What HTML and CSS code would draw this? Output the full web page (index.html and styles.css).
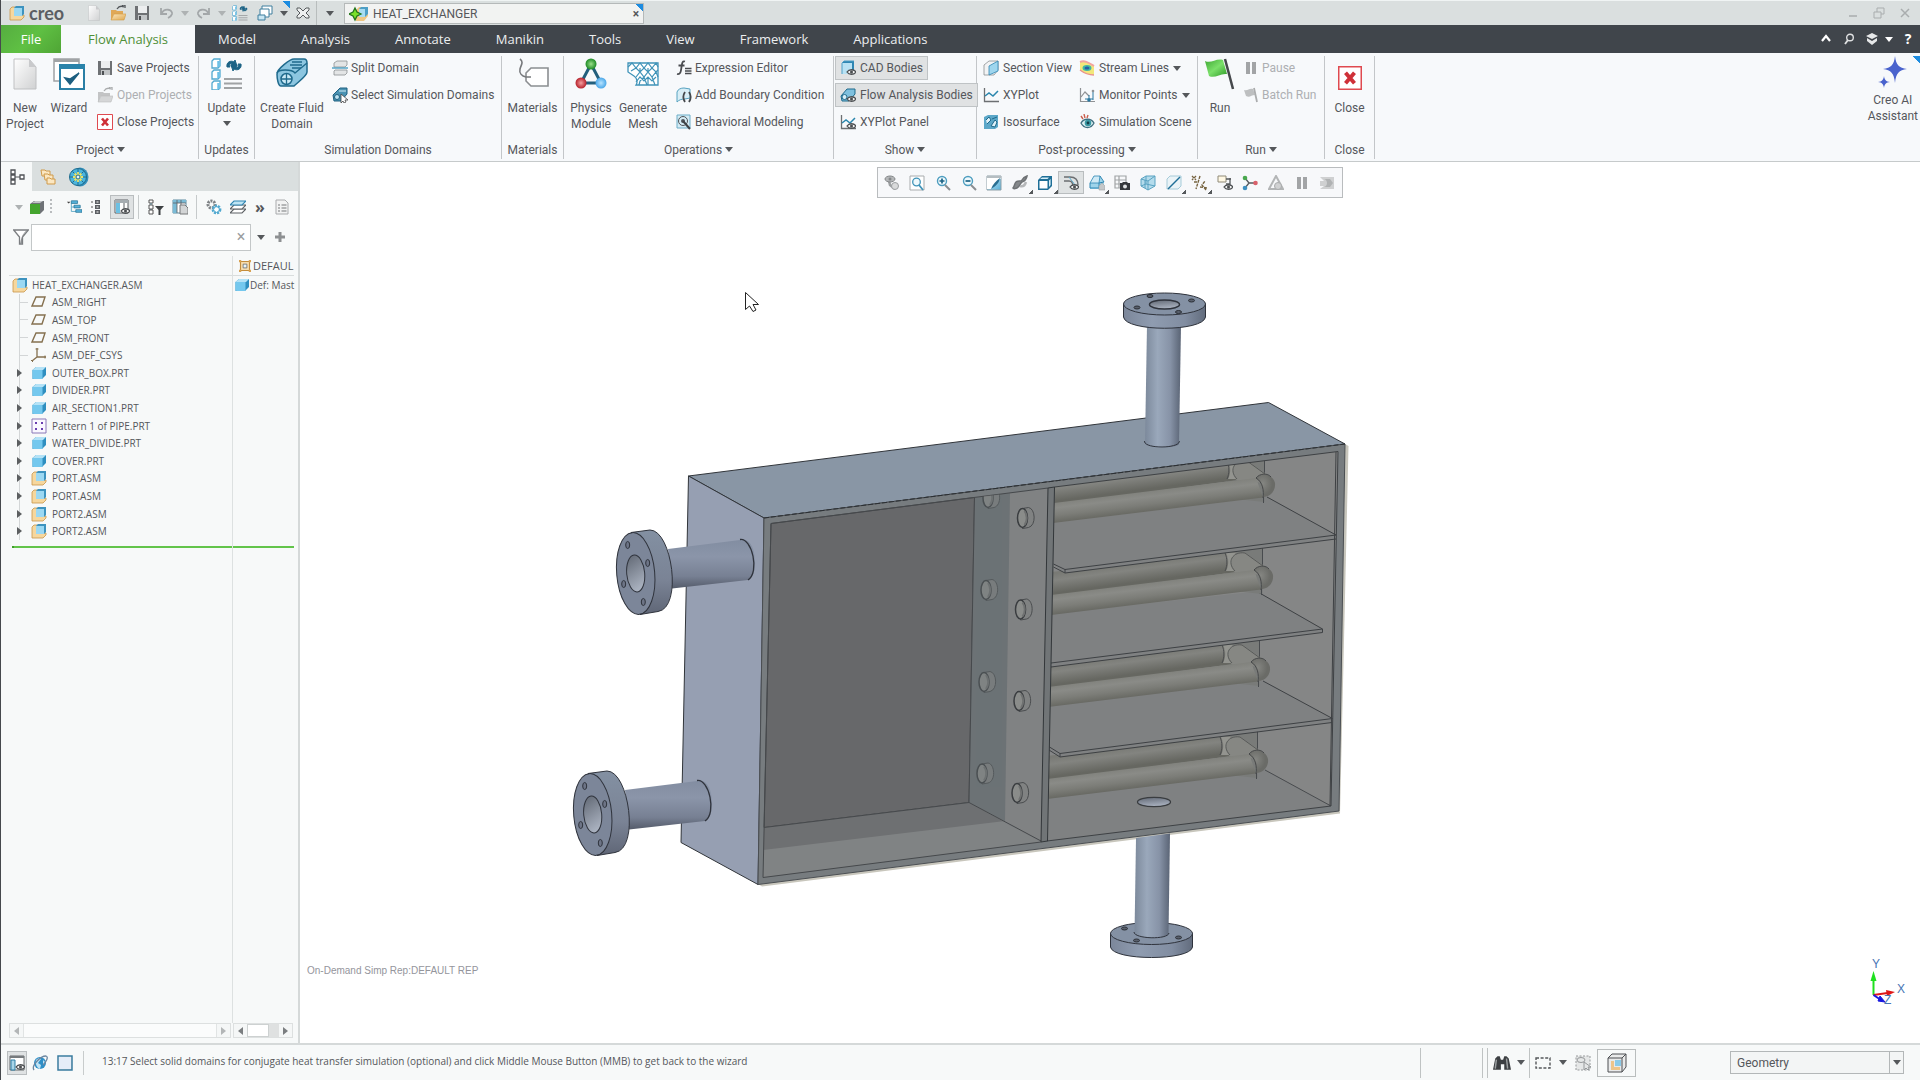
FILE: index.html
```html
<!DOCTYPE html>
<html lang="en">
<head>
<meta charset="utf-8">
<title>HEAT_EXCHANGER - Creo</title>
<link rel="stylesheet" href="styles.css">
</head>
<body>
<svg class="sprite" aria-hidden="true">
  <defs>
    <linearGradient id="gBlue" x1="0" y1="0" x2="1" y2="1"><stop offset="0" stop-color="#d3eefa"/><stop offset="1" stop-color="#58b0d8"/></linearGradient>
    <linearGradient id="gPage" x1="0" y1="0" x2="1" y2="1"><stop offset="0" stop-color="#fff"/><stop offset="1" stop-color="#d0d1d2"/></linearGradient>
    <linearGradient id="gFlag" x1="0" y1="0" x2="1" y2="1"><stop offset="0" stop-color="#3fa834"/><stop offset=".5" stop-color="#7be06a"/><stop offset="1" stop-color="#2f9a27"/></linearGradient>
    <linearGradient id="gGold" x1="0" y1="0" x2="1" y2="1"><stop offset="0" stop-color="#fbe6bd"/><stop offset="1" stop-color="#dfa850"/></linearGradient>
    <radialGradient id="gRed"><stop offset="0" stop-color="#f5a0a0"/><stop offset="1" stop-color="#b5202a"/></radialGradient>
    <radialGradient id="gGreen"><stop offset="0" stop-color="#9be08a"/><stop offset="1" stop-color="#1d8a25"/></radialGradient>
    <radialGradient id="gSky"><stop offset="0" stop-color="#b8e4ff"/><stop offset="1" stop-color="#4aa7e8"/></radialGradient>
  </defs>
  <symbol id="part" viewBox="0 0 16 16"><path d="M1.500 5l3.500-3h10v8l-4 4H1.500z" fill="#2f8fc0"/><path d="M1.500 5l3.500-3h10l-3 3z" fill="#b4e2f6"/><path d="M1.500 5h10v9H2.500l-1-1z" fill="#74c8ee"/></symbol>
  <symbol id="asm" viewBox="0 0 16 16"><path d="M1 4l2-2h4v8h8v2l-3 3H1z" fill="#f6d79e" stroke="#c9964a" stroke-width=".8"/><path d="M5 3l2-2h8v8l-2 2H5z" fill="#3d93bf"/><path d="M5 3h8v8H5z" fill="#9cd8f2"/></symbol>
  <symbol id="plane" viewBox="0 0 16 16"><path d="M5 3h9l-3 9H1z" fill="none" stroke="#85704f" stroke-width="1.400"/></symbol>
  <symbol id="csys" viewBox="0 0 16 16"><path d="M6 1v9h9M6 10l-5 4" fill="none" stroke="#85704f" stroke-width="1.300"/><path d="M4.500 2h3M14 8.500v3M0 13l2 2" stroke="#85704f"/></symbol>
  <symbol id="pattern" viewBox="0 0 16 16"><path d="M1 1h14v14H1z" fill="#faf8ff" stroke="#8b79b8"/><path d="M4 4h2v2H4zM10 4h2v2h-2zM4 10h2v2H4zM10 10h2v2h-2z" fill="#6a3fb0"/></symbol>
  <symbol id="page" viewBox="0 0 24 32"><path d="M1 1h15l7 8v22H1z" fill="url(#gPage)" stroke="#bfc0c2"/><path d="M16 1v8h7z" fill="#c9cacc"/></symbol>
  <symbol id="folder" viewBox="0 0 16 16"><path d="M1 5h5l1 1h6v3H4l-2 6H1z" fill="#e0a857"/><path d="M4 9h12l-2 6H1z" fill="url(#gGold)" stroke="#d29a45" stroke-width=".6"/><path d="M7 4c2-3 5-3 7-2m-2-2h3v3" fill="none" stroke="#505458" stroke-width="1.300"/></symbol>
  <symbol id="folderOff" viewBox="0 0 16 16"><path d="M1 5h5l1 1h6v3H4l-2 6H1z" fill="#c3c4c5"/><path d="M4 9h12l-2 6H1z" fill="#d5d6d7" stroke="#bcbdbe" stroke-width=".6"/><path d="M7 4c2-3 5-3 7-2m-2-2h3v3" fill="none" stroke="#aaacad" stroke-width="1.300"/></symbol>
  <symbol id="save" viewBox="0 0 16 16"><path d="M1 1h14v14H1z" fill="#6e7174"/><path d="M4 1h9v7H4z" fill="#eceeef"/><path d="M4 10h9v5H4z" fill="#c2c5c7"/><path d="M5 11h2v4H5z" fill="#4d5053"/></symbol>
  <symbol id="undo" viewBox="0 0 16 16"><path d="M3 3v6h6M4 8c2-5 11-4 10 1-.5 2-2 3-4 4" fill="none" stroke="#a3a7a9" stroke-width="1.800"/></symbol>
  <symbol id="regen" viewBox="0 0 32 32"><g fill="#fff" stroke="#51a9d0" stroke-width="1.300"><path d="M1 3l2-2h6v7l-2 2H1z"/><path d="M1 14l2-2h6v7l-2 2H1z"/><path d="M1 25l2-2h6v7l-2 2H1z"/></g><path d="M7.500 3v6M7.500 14v6M7.500 25v6" stroke="#6cc0e6" stroke-width="2.500"/><path d="M16 9c-1-5 4-7 7-5l1-2 2 6-6 0 1-2c-2-1-3 1-2 3zM30 6c1 5-4 7-7 5l-1 2-2-6 6 0-1 2c2 1 3-1 2-3z" fill="#1c6385" stroke="#1c6385"/><path d="M13 21h18M13 25.500h18M13 30h18" stroke="#9fa2a4" stroke-width="1.800"/></symbol>
  <symbol id="windows" viewBox="0 0 16 16"><path d="M5 1h10v8H5z" fill="#fff" stroke="#3f7f9e"/><path d="M3 4h9v8H3z" fill="#fff" stroke="#3f7f9e"/><path d="M1 10h7v5H1z" fill="#c9e6f3" stroke="#3f7f9e"/></symbol>
  <symbol id="xout" viewBox="0 0 16 16"><path d="M2 3h3l3 3 3-3h3v2l-3 3 3 3v2h-3l-3-3-3 3H2v-2l3-3-3-3z" fill="#eef0f0" stroke="#565a5d"/></symbol>
  <symbol id="wizard" viewBox="0 0 32 32"><path d="M1 1h25v22H1z" fill="#fff" stroke="#a0a3a5" stroke-width="1.500"/><path d="M1 1h25v3H1z" fill="#a0a3a5"/><path d="M7 8h24v23H7z" fill="#fff" stroke="#2a7fa5" stroke-width="2"/><path d="M6 6h26v5H6z" fill="#2a83aa"/><path d="M12 20l5 6 9-11-9 6z" fill="#1d5f80" stroke="#1d5f80" stroke-width="1.500"/></symbol>
  <symbol id="redx" viewBox="0 0 16 16"><path d="M.5.500h15v15H.500z" fill="#fff" stroke="#df4a50"/><path d="M5 4.500l6 7M11 4.500l-6 7" stroke="#cf3038" stroke-width="2.600"/></symbol>
  <symbol id="fluid" viewBox="0 0 32 32"><path d="M1 16C1 11 14 1 18 1h10c2 0 3 2 3 4v9c0 4-9 10-13 14H5c-3 0-4-8-4-12z" fill="#8cc6e0" stroke="#1f6a8c" stroke-width="1.500"/><path d="M1 15c1-4 15-4 18 0l12-10" fill="none" stroke="#1f6a8c" stroke-width="1.300"/><circle cx="10.500" cy="21" r="5.500" fill="#c8e8f5" stroke="#1f6a8c" stroke-width="1.500"/><path d="M10.500 15.500v11M5 21h11M16 4h10M14 7h12M16 10h9" stroke="#1f6a8c" stroke-width="1.300"/></symbol>
  <symbol id="split" viewBox="0 0 16 16"><path d="M2 3l3-2h10v4l-2 2H2z" fill="#e3e5e6" stroke="#8c9092" stroke-width=".8"/><path d="M0 8h16" stroke="#3e98bf" stroke-width="1.300"/><path d="M2 11l1-1h12v3l-2 2H2z" fill="#e3e5e6" stroke="#8c9092" stroke-width=".8"/></symbol>
  <symbol id="selsim" viewBox="0 0 16 16"><path d="M1 8l7-7h7v6l-6 7H2z" fill="#4b93b3" stroke="#1f6080" stroke-width="1"/><circle cx="5" cy="10" r="2.500" fill="#bfe3f2" stroke="#1f6080"/><path d="M7 4h7" stroke="#d5eef8"/><path d="M9 7v9l2-2 1 2 2-1-1-2h3z" fill="#fff" stroke="#444" stroke-width=".8"/></symbol>
  <symbol id="tag" viewBox="0 0 32 32"><path d="M9 15l5-5h17v18H14l-5-5z" fill="#fff" stroke="#8b8e91" stroke-width="1.600"/><path d="M3 1c4 3 1 6 0 10s2 7 6 8l5 0" fill="none" stroke="#77797c" stroke-width="1.600"/></symbol>
  <symbol id="physics" viewBox="0 0 32 32"><path d="M16 6L6 25h20z" fill="none" stroke="#235f7c" stroke-width="3"/><circle cx="16" cy="6" r="5.500" fill="url(#gGreen)"/><circle cx="6" cy="25" r="5.500" fill="url(#gRed)"/><circle cx="26" cy="25" r="5.500" fill="url(#gSky)"/></symbol>
  <symbol id="mesh" viewBox="0 0 32 32"><path d="M1 5h30v22H9c2-3 1-7-2-9l-6-4z" fill="#fff" stroke="#3f93b8" stroke-width="1.300"/><path d="M1 9l4-4 4 5 4-5 4 5 4-5 4 5 4-5 2 4M4 13l5-3 4 4 4-4 4 4 4-4 4 4 2-2M9 19l4-5 4 5 4-5 4 5 4-5 2 5M9 24l4-5 4 4 4-4 4 4 4-4M12 27l1-4 4-4 3 8M21 27V19M28 27l-3-8M13 10v4M21 10v4" fill="none" stroke="#3f93b8" stroke-width="1.200"/></symbol>
  <symbol id="fx" viewBox="0 0 16 16"><path d="M9 1.500C6 .5 6 4 5.500 7S5 15 1 14M2.500 5.500h6" fill="none" stroke="#4a4c50" stroke-width="1.800"/><path d="M9 8.500h6.500M9 11h6.500M9 13.500h6.500" stroke="#4a4c50" stroke-width="1.300"/></symbol>
  <symbol id="bound" viewBox="0 0 16 16"><path d="M1 15V5c1-3 4-4 7-4l6 1v9l-5 1c-4 0-6 1-8 3z" fill="#d8eef6" stroke="#56a2c0"/><path d="M9 5c-2 3-2 7 0 10M13 5c2 3 2 7 0 10" fill="none" stroke="#44484b" stroke-width="1.800"/></symbol>
  <symbol id="behav" viewBox="0 0 16 16"><path d="M1 1h13v13H1z" fill="#d5ecf5" stroke="#6cadc8"/><circle cx="7" cy="7" r="4.500" fill="none" stroke="#4f5459"/><circle cx="7" cy="7" r="2" fill="#4f5459"/><path d="M7 7l7 8" stroke="#3f4347" stroke-width="2"/></symbol>
  <symbol id="eye" viewBox="0 0 16 16"><path d="M7 12c2-3 7-3 9 0-2 3-7 3-9 0z" fill="#f4f4f4" stroke="#4b4e51" stroke-width="1.300"/><circle cx="11.500" cy="12" r="1.500" fill="#4b4e51"/></symbol>
  <symbol id="cadbody" viewBox="0 0 16 16"><path d="M2 3l2-2h10v11l-2 2H2z" fill="#2f86b3"/><path d="M2 3h10v11H2z" fill="#b9e2f4"/><path d="M2 14V3l2-2h10" fill="none" stroke="#4f9fc6"/><use href="#eye"/></symbol>
  <symbol id="flowbody" viewBox="0 0 16 16"><path d="M1 9l6-7h8v5l-6 7H2z" fill="#7fc0de" stroke="#1f6a8c"/><circle cx="4.500" cy="10" r="2.500" fill="#d7eef8" stroke="#1f6a8c"/><use href="#eye"/></symbol>
  <symbol id="plot" viewBox="0 0 16 16"><path d="M1.500 1v13.500H16" fill="none" stroke="#6c6f72" stroke-width="1.300"/><path d="M2 9l4-3 4 3 5-5" fill="none" stroke="#2a86ad" stroke-width="1.500"/></symbol>
  <symbol id="section" viewBox="0 0 16 16"><path d="M1 5l5-4h9v9l-4 5H1z" fill="#f2f3f4" stroke="#8c9093" stroke-width=".8"/><path d="M6 6l9-5v10l-9 4z" fill="#9fd6ee" stroke="#2f86b3" stroke-width=".8"/></symbol>
  <symbol id="iso" viewBox="0 0 16 16"><path d="M1 3l4-2h10v12l-3 2H1z" fill="#5ba7c8"/><path d="M3 6l3-3 2 3-4 4M9 5l5-2M8 12l4-6 2 2-2 5z" fill="#dff1f8" stroke="#1f6a8c"/></symbol>
  <symbol id="stream" viewBox="0 0 16 16"><path d="M1 2c5-2 9 1 14 4v9c-6 0-10-2-14-5z" fill="#f2e77a"/><path d="M1 2c5-2 9 1 14 4" fill="none" stroke="#f2a5a0" stroke-width="2"/><ellipse cx="8" cy="8" rx="4.500" ry="3" fill="#3eb6a6"/><ellipse cx="8" cy="8" rx="2.500" ry="1.500" fill="#285ea5"/><path d="M1 10c4 3 8 5 14 5" fill="none" stroke="#e9938f" stroke-width="1.500"/></symbol>
  <symbol id="monitor" viewBox="0 0 16 16"><path d="M1.500 1v13.500H16M2 10l4-5 4 4" fill="none" stroke="#8f9295" stroke-width="1.200"/><path d="M6 12h8M10 8v6M14 4v9" stroke="#2a78a0"/><circle cx="10" cy="13" r="1.800" fill="#2a78a0"/><circle cx="14" cy="4" r="1.300" fill="#8f9295"/></symbol>
  <symbol id="scene" viewBox="0 0 16 16"><path d="M2 9c3-5 10-5 13 0-3 6-10 6-13 0z" fill="#dff1f3" stroke="#3f6f80" stroke-width="1.300"/><circle cx="9" cy="9" r="3.300" fill="#3a9aa5"/><circle cx="9" cy="9" r="1.400" fill="#153d48"/><path d="M2 2l2 3M5 0l1 4M9 1L8 4" stroke="#c9604e" stroke-width="1.400"/></symbol>
  <symbol id="flag" viewBox="0 0 32 32"><path d="M1 3c6 3 11-3 18-1l4 14c-7-1-12 5-18 2z" fill="url(#gFlag)"/><path d="M21 1l8 30" stroke="#45484b" stroke-width="2.500"/></symbol>
  <symbol id="flagOff" viewBox="0 0 16 16"><path d="M1 3c4 1 5-2 9-1l2 6c-4 0-5 3-9 1z" fill="#bdbfc0"/><path d="M11 1l3 14" stroke="#aaacad" stroke-width="1.800"/></symbol>
  <symbol id="pause" viewBox="0 0 16 16"><path d="M3 2h4v12H3zM9 2h4v12H9z" fill="#a2a4a6"/></symbol>
  <symbol id="spark" viewBox="0 0 32 32"><path d="M18 0c1 9 4 12 12 13-8 1-11 4-12 14-1-10-4-13-12-14 8-1 11-4 12-13zM7 20c.6 4 2 5.500 6 6-4 .5-5.400 2-6 6-.6-4-2-5.500-6-6 4-.5 5.400-2 6-6z" fill="#4a63cd"/></symbol>
  <symbol id="mag" viewBox="0 0 16 16"><circle cx="7" cy="6" r="4.500" fill="#eef8fc" stroke="#4d9dbf" stroke-width="1.400"/><path d="M10 10l5 5" stroke="#8a8d90" stroke-width="2"/></symbol>
  <symbol id="zin" viewBox="0 0 16 16"><use href="#mag"/><path d="M4.500 6h5M7 3.500v5" stroke="#1c6385" stroke-width="1.700"/></symbol>
  <symbol id="zout" viewBox="0 0 16 16"><use href="#mag"/><path d="M4.500 6h5" stroke="#1c6385" stroke-width="1.700"/></symbol>
  <symbol id="zfit" viewBox="0 0 16 16"><path d="M1 1h14v14H1z" fill="#fff" stroke="#a9acae"/><circle cx="7.500" cy="7" r="3.800" fill="#eef8fc" stroke="#3f93b8" stroke-width="1.300"/><path d="M10 10l4 5" stroke="#3f93b8" stroke-width="1.800"/></symbol>
  <symbol id="refit" viewBox="0 0 16 16"><path d="M5 6l1 4 5 4" fill="none" stroke="#9c9fa1" stroke-width="2.500"/><ellipse cx="6" cy="4" rx="5" ry="3" fill="#b4b6b8" stroke="#85888a"/><circle cx="6" cy="4" r="1.500" fill="#85888a"/><circle cx="11" cy="11" r="3.500" fill="#d9dadb" stroke="#9c9fa1"/></symbol>
  <symbol id="repaint" viewBox="0 0 16 16"><path d="M1 1h14v14H1z" fill="url(#gBlue)" stroke="#8fa0a8"/><path d="M1 1h14v2L5 14H1z" fill="#fff"/><path d="M1 1h14v2H1z" fill="#b5bdc1"/><path d="M14 3c-1 5-4 8-9 11 2-5 5-8 9-11z" fill="#2a6f92"/></symbol>
  <symbol id="shade" viewBox="0 0 16 16"><path d="M15 1c-1 5-3 5-5 6s-2 5-5 6-3 1-4 0c2-2 1-4 3-6s5 0 6-2 2-3 5-4z" fill="#85888b" stroke="#6f7275" stroke-width="1.500"/><path d="M8 11c3 1 5-1 6-4" fill="none" stroke="#b5b7b9" stroke-width="2.500"/></symbol>
  <symbol id="box3" viewBox="0 0 16 16"><path d="M1 5l4-4h10v10l-4 4H1z" fill="#1f6f97"/><path d="M2.500 6h8v7.500h-8z" fill="#fff"/><path d="M3 4l2-1.600h7L10.500 4zM12 5.500L13.600 4v6L12 12z" fill="#d6eef8"/></symbol>
  <symbol id="appear" viewBox="0 0 16 16"><path d="M1 2h6c5 0 8 3 8 8M1 6h5c3 0 4 2 4 6" fill="none" stroke="#6b6e71" stroke-width="1.400"/><path d="M6 2l6 8" stroke="#57a7c7"/><use href="#eye"/></symbol>
  <symbol id="house" viewBox="0 0 16 16"><path d="M1 8l4-7h6l4 7v4l-3 2H1z" fill="#9ed4eb"/><path d="M5 1h6l-1 7H1z" fill="#cfeaf6" stroke="#2f86b3" stroke-width=".8"/><path d="M1 8v5h9V8l5-1-4-6" fill="none" stroke="#2f86b3"/><path d="M10 11l3-3 3 3v4h-6z" fill="#c4c7c9" stroke="#a0a3a5" stroke-width=".6"/></symbol>
  <symbol id="views" viewBox="0 0 16 16"><path d="M1 1h11v12H1zM1 5h11M1 9h11M5 1v12" fill="none" stroke="#a0a3a5" stroke-width="1.200"/><path d="M6 8h2l1-1h4l1 1h2v7H6z" fill="#35383b"/><circle cx="11" cy="11.500" r="2" fill="#e1e3e4"/></symbol>
  <symbol id="persp" viewBox="0 0 16 16"><path d="M1 4l5-3h9v10L8 15l-7-4z" fill="#b5dcec" stroke="#5aa3c2"/><path d="M8 6v9M1 4l7 2 7-5M5 5v8M6 1v8l9 2M6 9l-5 2" fill="none" stroke="#5aa3c2"/></symbol>
  <symbol id="plane3" viewBox="0 0 16 16"><path d="M1 4l3-3h11v10l-3 3H1z" fill="#eaf3f7" stroke="#a6cbd9"/><path d="M2 14L14 2" stroke="#1f6f97" stroke-width="1.500"/></symbol>
  <symbol id="datum" viewBox="0 0 16 16"><path d="M1 1l4 4M5 1L1 5M9 1L5 14M6 7H2M15 15l-4-5 3-4M9 12l7 1" fill="none" stroke="#776440" stroke-width="1.400" stroke-dasharray="3 1"/></symbol>
  <symbol id="annot" viewBox="0 0 16 16"><path d="M1 1h8v6H1z" fill="#fff8e4" stroke="#8f8a78"/><path d="M9 4h5M13 3v6h-4" fill="none" stroke="#55585b" stroke-width="1.300"/><use href="#eye"/></symbol>
  <symbol id="spin" viewBox="0 0 16 16"><path d="M3 3l4 5h7M7 8l-4 5" fill="none" stroke="#55595d" stroke-width="1.300"/><circle cx="3" cy="3" r="2.300" fill="#49a84e"/><circle cx="3" cy="13" r="2.300" fill="#3f8fc0"/><circle cx="13.500" cy="8" r="2.300" fill="#d9616b"/></symbol>
  <symbol id="tri" viewBox="0 0 16 16"><path d="M8 1l7 13H1z" fill="none" stroke="#b3b5b6" stroke-width="2"/><circle cx="10" cy="11" r="3.500" fill="#d0d1d2" stroke="#a9abac"/></symbol>
  <symbol id="stepOff" viewBox="0 0 16 16"><path d="M1 2h14v12H1l4-3H1V6h4z" fill="#cfd0d1"/><path d="M5 4h6l3 4-3 4H5c4-1 4-7 0-8z" fill="#b0b2b3"/></symbol>
  <symbol id="treeTab" viewBox="0 0 16 16"><path d="M4 4v8M4 8h7" stroke="#505357"/><g fill="#fff" stroke="#505357" stroke-width="1.300"><path d="M2 1h4v4H2zM2 6h4v4H2zM2 11h4v4H2zM11 6h4v4h-4z"/></g></symbol>
  <symbol id="foldTab" viewBox="0 0 16 16"><g fill="#fbe7c2" stroke="#cf9a4a"><path d="M1 1h4l1 1h4v5H2z"/><path d="M4 5h4l1 1h4v5H5z"/><path d="M7 9h3l1 1h4v5H7z"/></g></symbol>
  <symbol id="wheel" viewBox="0 0 20 20"><ellipse cx="11" cy="10" rx="8.500" ry="9.500" fill="#3590bb"/><circle cx="9" cy="10" r="8.500" fill="#4bb5de" stroke="#1f6a8c"/><path d="M9 2v16M1 10h16M3.500 4.500l11 11M14.500 4.500l-11 11" stroke="#1f6a8c" stroke-width="1"/><path d="M9 5v10M4 10h10M5.500 6.500l7 7M12.500 6.500l-7 7" stroke="#e7e36a" stroke-width="1.800"/><circle cx="9" cy="10" r="2" fill="#e6f4fa" stroke="#1f6a8c"/></symbol>
  <symbol id="green" viewBox="0 0 16 16"><path d="M1 5l4-3h10v9l-4 4H1z" fill="#6e7276"/><path d="M3 4l3-2h8l-3 2z" fill="#c2c5c7"/><path d="M1 5h10v10H1z" fill="#45a52f"/></symbol>
  <symbol id="treeA" viewBox="0 0 18 16"><path d="M1 2h4L3 4z" fill="#444"/><path d="M6 3v10h6M6 8h4" fill="none" stroke="#5aa6c5"/><path d="M6 1h7v3H6zM9 6h7v3H9zM11 11h7v3h-7z" fill="#57b3db" stroke="#236f92" stroke-width=".8"/></symbol>
  <symbol id="treeB" viewBox="0 0 10 16"><path d="M4 1h5v4H4zM4 6h5v4H4zM4 11h5v4H4z" fill="#5b5e62"/><path d="M5.500 3h2M5.500 8h2M5.500 13h2" stroke="#fff"/><path d="M0 3h2M0 8h2M0 13h2" stroke="#555"/></symbol>
  <symbol id="cols" viewBox="0 0 16 16"><path d="M1 1h13v13H1z" fill="#fff" stroke="#5d6164"/><path d="M1 1h13v3H1z" fill="#a6adb1"/><path d="M2 4h4v10H2z" fill="#6cc0e3"/><path d="M10 4v10" stroke="#5d6164"/><use href="#eye"/></symbol>
  <symbol id="filt" viewBox="0 0 16 16"><path d="M3 1v14" stroke="#4d9dbf"/><path d="M1 1h4v3H1zM1 6h4v4H1zM1 11h4v4H1z" fill="#fff" stroke="#555"/><path d="M7 7h9l-3.500 4v5h-2v-5z" fill="#3d4043"/></symbol>
  <symbol id="colset" viewBox="0 0 16 16"><path d="M1 1h13v13H1z" fill="#fff" stroke="#5d8ba0"/><path d="M1 1h13v3H1zM1 1h4v13H1z" fill="#7abbd6"/><path d="M1 4h13M5 1v13M9 1v13" stroke="#5d6164" stroke-width=".8"/><path d="M8 6h5l3 3v6H8z" fill="#d3d5d6" stroke="#77797b"/></symbol>
  <symbol id="gear" viewBox="0 0 16 16"><circle cx="5.500" cy="5.500" r="3.500" fill="none" stroke="#7e8285" stroke-width="3" stroke-dasharray="2 1"/><circle cx="10.500" cy="10.500" r="3.600" fill="#fff" stroke="#51a9d0" stroke-width="2.600" stroke-dasharray="2 1"/><circle cx="10.500" cy="10.500" r="3" fill="none" stroke="#51a9d0"/></symbol>
  <symbol id="layers" viewBox="0 0 16 16"><g fill="#fff" stroke="#5c6064" stroke-width="1.100"><path d="M4 10h12l-4 4H0z"/><path d="M4 6h12l-4 4H0z"/><path d="M4 2h12l-4 4H0z" fill="#bfe5f4" stroke="#2f86b3"/></g></symbol>
  <symbol id="docs" viewBox="0 0 16 16"><path d="M2 1h9l3 3v11H2z" fill="#f2f3f3" stroke="#a9abad"/><path d="M4 6h2M4 9h2M4 12h2M7.500 6h5M7.500 9h5M7.500 12h5" stroke="#a0a2a4" stroke-width="1.500"/></symbol>
  <symbol id="funnel" viewBox="0 0 16 16"><path d="M.7 1h14.600L9.500 8v7h-3V8z" fill="#fff" stroke="#7b7e81" stroke-width="1.300"/><path d="M14 1L9 8v7h-2c1-5 2-10 7-14z" fill="#8b8e91"/></symbol>
  <symbol id="frame" viewBox="0 0 16 16"><path d="M2 2h12v12H2z" fill="#f6dcae" stroke="#c48c3a" stroke-width="1.500"/><path d="M5.500 5.500h5v5h-5z" fill="#e6f4fb" stroke="#666" /><path d="M0 0h3v3H0zM13 0h3v3h-3zM0 13h3v3H0zM13 13h3v3h-3z" fill="#d8a253"/></symbol>
  <symbol id="binoc" viewBox="0 0 16 16"><path d="M2 4l2-2h2l1 3h2l1-3h2l2 2 2 10h-6V9H7v5H0z" fill="#3c3f42"/><path d="M3 5L2 13M12 4l1 9" stroke="#9b9fa1" stroke-width="1.300"/></symbol>
  <symbol id="navpane" viewBox="0 0 16 16"><path d="M1 1h14v14H1z" fill="#fff" stroke="#666a6d"/><path d="M1 1h14v2H1z" fill="#777b7e"/><path d="M2 5h4v10H2z" fill="#a9d5e8" stroke="#2f7fa5"/><use href="#eye"/></symbol>
  <symbol id="globe" viewBox="0 0 16 16"><circle cx="8" cy="8" r="6" fill="#2e8fc7"/><path d="M4 5c2-2 4-2 5-1L6 8l3 2-1 4C5 13 3 9 4 5zM11 5l2 2-2 3z" fill="#bfe3f5"/><path d="M2 15C-1 11 8 1 14 1c3 1 0 6-3 9" fill="none" stroke="#6b86a0" stroke-width="1.300"/></symbol>
  <symbol id="screen" viewBox="0 0 16 16"><path d="M1 1h14v14H1z" fill="url(#gPage)" stroke="#3a7ca0" stroke-width="1.500"/><path d="M2 2h12v12H2z" fill="#e6edf8"/></symbol>
  <symbol id="dash" viewBox="0 0 16 16"><path d="M1 3h14v10H1z" fill="none" stroke="#55585b" stroke-width="1.400" stroke-dasharray="3 1.600"/></symbol>
  <symbol id="selOff" viewBox="0 0 16 16"><path d="M1 1h14v14H1z" fill="#e5e7e7" stroke="#96999b" stroke-dasharray="2 1.500"/><ellipse cx="6" cy="5" rx="4" ry="2.500" fill="none" stroke="#96999b"/><path d="M9 7v8l2-2 2 2 1-1-1-2h3z" fill="#e5e7e7" stroke="#96999b"/></symbol>
  <symbol id="volume" viewBox="0 0 20 20"><path d="M1 5l4-4h14v13l-4 5H1z" fill="#e9eaea" stroke="#4c4f52"/><path d="M1 5h14v14M15 5l4-4" fill="none" stroke="#4c4f52"/><path d="M4 8h3v6h6v3H4z" fill="#eec58a"/><path d="M8 7h6v6H8z" fill="#8ccbe8"/></symbol>
</svg>

<div class="app">
  <header class="titlebar">
    <div class="brand"><svg class="i16"><use href="#asm"/></svg><span>creo</span></div>
    <button class="ib w24" aria-label="New"><svg class="i16"><use href="#page"/></svg></button>
    <button class="ib w24" aria-label="Open"><svg class="i16"><use href="#folder"/></svg></button>
    <button class="ib w24" aria-label="Save"><svg class="i16"><use href="#save"/></svg></button>
    <button class="ib w24" aria-label="Undo"><svg class="i16"><use href="#undo"/></svg></button>
    <button class="ib w14" aria-label="Undo list"><i class="arr off"></i></button>
    <button class="ib w24" aria-label="Redo"><svg class="i16 flip"><use href="#undo"/></svg></button>
    <button class="ib w12" aria-label="Redo list"><i class="arr off"></i></button>
    <button class="ib w24" aria-label="Regenerate"><svg class="i16"><use href="#regen"/></svg></button>
    <button class="ib w26" aria-label="Windows"><svg class="i16"><use href="#windows"/></svg></button>
    <button class="ib w12 corner" aria-label="Windows list"><i class="arr"></i></button>
    <button class="ib w26" aria-label="Close window"><svg class="i16"><use href="#xout"/></svg></button>
    <button class="ib w26 lined" aria-label="Customize toolbar"><i class="arr"></i></button>
    <div class="doctab corner"><svg class="i20" viewBox="0 0 20 16"><path d="M7 4l3-3h9v9l-4 5H7z" fill="#efc682"/><path d="M10 3l2-2h7v7l-3 3h-6z" fill="#4e9fc6"/><path d="M10 3h6v8h-6z" fill="#a8dcf2"/><path d="M6 2l2 4 4 2-4 2-2 4-2-4-4-2 4-2z" fill="#7be02a" stroke="#23761c" stroke-width="1.300"/></svg><span>HEAT_EXCHANGER</span><button class="ib w12" aria-label="Close tab">×</button></div>
    <div class="winbtns">
      <button class="ib w26" aria-label="Minimize"><svg class="i12" viewBox="0 0 12 12"><path d="M2 9h8" stroke="#a9adae" stroke-width="1.500"/></svg></button>
      <button class="ib w26" aria-label="Restore"><svg class="i12" viewBox="0 0 12 12"><path d="M1 5h7v6H1zM4 5V1h7v6H8" fill="none" stroke="#a9adae"/></svg></button>
      <button class="ib w26" aria-label="Close"><svg class="i12" viewBox="0 0 12 12"><path d="M2 2l8 8M10 2l-8 8" stroke="#a9adae" stroke-width="1.500"/></svg></button>
    </div>
  </header>

  <nav class="tabs">
    <a class="file" href="#file">File</a>
    <a class="active" href="#flow">Flow Analysis</a>
    <a href="#model">Model</a><a href="#analysis">Analysis</a><a href="#annotate">Annotate</a><a href="#manikin">Manikin</a><a href="#tools">Tools</a><a href="#view">View</a><a href="#framework">Framework</a><a href="#applications">Applications</a>
    <div class="tabtools">
      <button class="ib w20" aria-label="Minimize ribbon"><svg class="i12" viewBox="0 0 12 12"><path d="M2 8l4-5 4 5" fill="none" stroke="#fff" stroke-width="2.200"/></svg></button>
      <button class="ib w26" aria-label="Search"><svg class="i12" viewBox="0 0 12 12"><circle cx="7" cy="4.500" r="3.300" fill="none" stroke="#dfe1e2" stroke-width="1.400"/><path d="M5 7l-3 4" stroke="#dfe1e2" stroke-width="1.800"/></svg></button>
      <button class="ib w20" aria-label="Learning"><svg class="i12" viewBox="0 0 12 12"><path d="M6 0l6 3-6 3-6-3zM1 5l5 3 5-3v3l-5 4-5-4z" fill="#e6e8e9"/></svg></button>
      <button class="ib w14" aria-label="Learning list"><i class="arr light"></i></button>
      <button class="ib w24 help" aria-label="Help">?</button>
    </div>
  </nav>

  <section class="ribbon">
    <div class="group g-project">
      <div class="tools">
        <button class="big b44"><svg class="i32"><use href="#page"/></svg>New<br>Project</button>
        <button class="big b44"><svg class="i32"><use href="#wizard"/></svg>Wizard</button>
        <div class="stack">
          <button class="sm"><svg class="i16"><use href="#save"/></svg>Save Projects</button>
          <button class="sm" disabled><svg class="i16"><use href="#folderOff"/></svg>Open Projects</button>
          <button class="sm"><svg class="i16"><use href="#redx"/></svg>Close Projects</button>
        </div>
      </div>
      <div class="cap">Project <i class="arr"></i></div>
    </div>
    <div class="group g-updates">
      <div class="tools mid"><button class="big b44"><svg class="i32"><use href="#regen"/></svg>Update<br><i class="arr"></i></button></div>
      <div class="cap">Updates</div>
    </div>
    <div class="group g-domains">
      <div class="tools">
        <button class="big b72"><svg class="i32"><use href="#fluid"/></svg>Create Fluid<br>Domain</button>
        <div class="stack tight">
          <button class="sm"><svg class="i16"><use href="#split"/></svg>Split Domain</button>
          <button class="sm"><svg class="i16"><use href="#selsim"/></svg>Select Simulation Domains</button>
        </div>
      </div>
      <div class="cap">Simulation Domains</div>
    </div>
    <div class="group g-materials">
      <div class="tools mid"><button class="big b60"><svg class="i32"><use href="#tag"/></svg>Materials</button></div>
      <div class="cap">Materials</div>
    </div>
    <div class="group g-operations">
      <div class="tools">
        <button class="big b44"><svg class="i32"><use href="#physics"/></svg>Physics<br>Module</button>
        <button class="big b60"><svg class="i32"><use href="#mesh"/></svg>Generate<br>Mesh</button>
        <div class="stack tight">
          <button class="sm"><svg class="i16"><use href="#fx"/></svg>Expression Editor</button>
          <button class="sm"><svg class="i16"><use href="#bound"/></svg>Add Boundary Condition</button>
          <button class="sm"><svg class="i16"><use href="#behav"/></svg>Behavioral Modeling</button>
        </div>
      </div>
      <div class="cap">Operations <i class="arr"></i></div>
    </div>
    <div class="group g-show">
      <div class="tools">
        <div class="stack">
          <button class="sm on" aria-pressed="true"><svg class="i16"><use href="#cadbody"/></svg>CAD Bodies</button>
          <button class="sm on" aria-pressed="true"><svg class="i16"><use href="#flowbody"/></svg>Flow Analysis Bodies</button>
          <button class="sm"><svg class="i16"><use href="#plot"/><use href="#eye"/></svg>XYPlot Panel</button>
        </div>
      </div>
      <div class="cap">Show <i class="arr"></i></div>
    </div>
    <div class="group g-post">
      <div class="tools">
        <div class="stack">
          <button class="sm"><svg class="i16"><use href="#section"/></svg>Section View</button>
          <button class="sm"><svg class="i16"><use href="#plot"/></svg>XYPlot</button>
          <button class="sm"><svg class="i16"><use href="#iso"/></svg>Isosurface</button>
        </div>
        <div class="stack">
          <button class="sm"><svg class="i16"><use href="#stream"/></svg>Stream Lines <i class="arr"></i></button>
          <button class="sm"><svg class="i16"><use href="#monitor"/></svg>Monitor Points <i class="arr"></i></button>
          <button class="sm"><svg class="i16"><use href="#scene"/></svg>Simulation Scene</button>
        </div>
      </div>
      <div class="cap">Post-processing <i class="arr"></i></div>
    </div>
    <div class="group g-run">
      <div class="tools">
        <button class="big b40"><svg class="i32"><use href="#flag"/></svg>Run</button>
        <div class="stack tight">
          <button class="sm" disabled><svg class="i16"><use href="#pause"/></svg>Pause</button>
          <button class="sm" disabled><svg class="i16"><use href="#flagOff"/></svg>Batch Run</button>
        </div>
      </div>
      <div class="cap">Run <i class="arr"></i></div>
    </div>
    <div class="group g-close">
      <div class="tools mid"><button class="big b44"><svg class="i32" viewBox="0 0 32 32"><use href="#redx" x="3" y="8" width="26" height="24"/></svg>Close</button></div>
      <div class="cap">Close</div>
    </div>
    <button class="big assistant corner"><svg class="i32"><use href="#spark"/></svg>Creo AI<br>Assistant</button>
  </section>

  <main class="work">
    <aside class="side">
      <div class="sidetabs">
        <button class="ib on" aria-label="Model Tree"><svg class="i16"><use href="#treeTab"/></svg></button>
        <button class="ib" aria-label="Folder Browser"><svg class="i16"><use href="#foldTab"/></svg></button>
        <button class="ib" aria-label="Flow Analysis Tree"><svg class="i20"><use href="#wheel"/></svg></button>
      </div>
      <div class="sidebar-tools">
        <button class="ib w16" aria-label="Tree list"><i class="arr off"></i></button>
        <button class="ib w20" aria-label="Active model"><svg class="i16"><use href="#green"/></svg></button>
        <span class="grip"></span>
        <button class="ib w24" aria-label="Tree view"><svg class="i16"><use href="#treeA"/></svg></button>
        <button class="ib w20" aria-label="Expand all"><svg class="i16"><use href="#treeB"/></svg></button>
        <button class="ib w24 on" aria-label="Show columns" aria-pressed="true"><svg class="i16"><use href="#cols"/></svg></button>
        <span class="sep"></span>
        <button class="ib w24" aria-label="Tree filters"><svg class="i16"><use href="#filt"/></svg></button>
        <button class="ib w24" aria-label="Tree columns"><svg class="i16"><use href="#colset"/></svg></button>
        <span class="sep"></span>
        <button class="ib w24" aria-label="Settings"><svg class="i16"><use href="#gear"/></svg></button>
        <button class="ib w24" aria-label="Layers"><svg class="i16"><use href="#layers"/></svg></button>
        <button class="ib w20 more" aria-label="More">»</button>
        <button class="ib w24" aria-label="Show"><svg class="i16"><use href="#docs"/></svg></button>
      </div>
      <div class="filter">
        <svg class="i16"><use href="#funnel"/></svg>
        <label class="searchbox"><input type="text" aria-label="Search the model tree"><span>×</span></label>
        <button class="ib w16" aria-label="Search options"><i class="arr"></i></button>
        <button class="ib w24" aria-label="Add filter"><svg class="i12" viewBox="0 0 12 12"><path d="M6 1v10M1 6h10" stroke="#8d9092" stroke-width="3"/></svg></button>
      </div>
      <div class="tree">
        <div class="treemain">
          <div class="head"></div>
          <ul class="rows">
            <li class="root"><svg class="i16"><use href="#asm"/></svg>HEAT_EXCHANGER.ASM</li>
            <li><b></b><svg class="i16"><use href="#plane"/></svg>ASM_RIGHT</li>
            <li><b></b><svg class="i16"><use href="#plane"/></svg>ASM_TOP</li>
            <li><b></b><svg class="i16"><use href="#plane"/></svg>ASM_FRONT</li>
            <li><b></b><svg class="i16"><use href="#csys"/></svg>ASM_DEF_CSYS</li>
            <li><b class="exp"></b><svg class="i16"><use href="#part"/></svg>OUTER_BOX.PRT</li>
            <li><b class="exp"></b><svg class="i16"><use href="#part"/></svg>DIVIDER.PRT</li>
            <li><b class="exp"></b><svg class="i16"><use href="#part"/></svg>AIR_SECTION1.PRT</li>
            <li><b class="exp"></b><svg class="i16"><use href="#pattern"/></svg>Pattern 1 of PIPE.PRT</li>
            <li><b class="exp"></b><svg class="i16"><use href="#part"/></svg>WATER_DIVIDE.PRT</li>
            <li><b class="exp"></b><svg class="i16"><use href="#part"/></svg>COVER.PRT</li>
            <li><b class="exp"></b><svg class="i16"><use href="#asm"/></svg>PORT.ASM</li>
            <li><b class="exp"></b><svg class="i16"><use href="#asm"/></svg>PORT.ASM</li>
            <li><b class="exp"></b><svg class="i16"><use href="#asm"/></svg>PORT2.ASM</li>
            <li><b class="exp"></b><svg class="i16"><use href="#asm"/></svg>PORT2.ASM</li>
          </ul>
          <div class="endline first"></div>
        </div>
        <div class="treecol">
          <div class="head"><svg class="i12"><use href="#frame"/></svg>DEFAUL</div>
          <div class="rows"><div class="cell"><svg class="i16"><use href="#part"/></svg>Def: Mast</div></div>
          <div class="endline"></div>
        </div>
      </div>
      <div class="scrolls">
        <div class="hs main"><i class="al dim"></i><span class="track"></span><i class="ar dim"></i></div>
        <div class="hs"><i class="al"></i><span class="thumb"></span><span class="gray"></span><i class="ar"></i></div>
      </div>
    </aside>

    <section class="canvas">
      <svg class="model" viewBox="300 162 1620 881" preserveAspectRatio="xMidYMid meet">
        <defs>
          <linearGradient id="cylV" x1="0" x2="1"><stop offset="0" stop-color="#7c899b"/><stop offset=".35" stop-color="#9aa8bb"/><stop offset=".7" stop-color="#8793a7"/><stop offset="1" stop-color="#5a6475"/></linearGradient>
          <linearGradient id="rimV" x1="0" x2="1"><stop offset="0" stop-color="#7c879a"/><stop offset=".35" stop-color="#8f9cb0"/><stop offset=".75" stop-color="#818da1"/><stop offset="1" stop-color="#626c7d"/></linearGradient>
          <linearGradient id="cylH" x1="0" x2="0" y1="0" y2="1"><stop offset="0" stop-color="#828da1"/><stop offset=".35" stop-color="#8b95a9"/><stop offset=".75" stop-color="#778093"/><stop offset="1" stop-color="#545b6a"/></linearGradient>
          <linearGradient id="rim" x1="0" x2="0" y1="0" y2="1"><stop offset="0" stop-color="#8390a2"/><stop offset=".6" stop-color="#7a8395"/><stop offset="1" stop-color="#5f6676"/></linearGradient>
          <linearGradient id="bore" x1="0" y1="0" x2=".3" y2="1"><stop offset="0" stop-color="#5f6672"/><stop offset="1" stop-color="#a8b0be"/></linearGradient>
          <linearGradient id="tube" gradientUnits="userSpaceOnUse" x1="1150" y1="582" x2="1152.500" y2="603"><stop offset="0" stop-color="#80817c"/><stop offset=".3" stop-color="#8a8b87"/><stop offset=".65" stop-color="#7c7d78"/><stop offset="1" stop-color="#686963"/></linearGradient>
          <linearGradient id="tubeB" gradientUnits="userSpaceOnUse" x1="1150" y1="561" x2="1152.500" y2="580"><stop offset="0" stop-color="#797a75"/><stop offset=".35" stop-color="#838480"/><stop offset="1" stop-color="#666761"/></linearGradient>
          <radialGradient id="ball" cx=".35" cy=".4"><stop offset="0" stop-color="#858682"/><stop offset="1" stop-color="#6a6b67"/></radialGradient>
          <clipPath id="air"><path d="M1054.500 487L1338 451.500L1331 806L1047 841z"/></clipPath>
          <clipPath id="wall"><path d="M974.500 497.500L1048 488.500L1041 842L969 802z"/></clipPath>
          <g id="pipe">
            <path d="M1225 549L1262.500 545V594L1225 590z" fill="#797b79"/>
            <path d="M1262.500 546V568M1261.500 589V595" stroke="#484b4e"/>
            <path d="M1051 572L1225 552.500L1236 552V572L1051 597z" fill="url(#tubeB)"/>
            <path d="M1226 553c3 5 3 12 0 18l9 0v-18z" fill="#93948f"/>
            <path d="M1225 553c2.500 5 2.500 13 0 18" fill="none" stroke="#4c4e4f"/>
            <path d="M1239 552.500h6l20 14-6 8-24-2c-7-7-4-17 4-20z" fill="#868783"/>
            <path d="M1245 553c-12-2-19 9-10 18M1245 553l18 13" fill="none" stroke="#575958"/>
            <path d="M1051 595L1254 570L1261 589.500L1051 615z" fill="url(#tube)"/>
            <path d="M1254 570c5-6 17-4 19 5 1 8-5 14-12 14 2-8-2-14-7-19z" fill="url(#ball)"/>
            <path d="M1254 570c4-5 12-5 15-1M1254 570c7 4 8 13 7 20" fill="none" stroke="#464849"/>
          </g>
          <g id="ring"><path d="M0-9.500l6-1c7 1 8 18 0 20l-6 1z" fill="#808282" stroke="#4a4d4f"/><ellipse rx="5" ry="9.500" fill="#8a8c8a" stroke="#3a3d40" stroke-width="1.500"/><path d="M2-7c3 4 3 10 0 14" fill="none" stroke="#6f7171" stroke-width="2"/></g>
          <g id="port">
            <path d="M668 549L744 539.500c14 2 14 38 4 40.500L672 588.500z" fill="url(#cylH)"/>
            <path d="M740 539.500c12-2 20 33 8 40.500" fill="none" stroke="#2f333c" stroke-width="1.300"/>
            <path d="M631 532.500L650 530c22 0 33 78 8 81.500L640 614.500z" fill="url(#rim)" stroke="#2f333c"/>
            <g transform="rotate(-5 635.700 573.500)"><ellipse cx="635.700" cy="573.500" rx="19" ry="41" fill="#7c8699" stroke="#2f333c"/><ellipse cx="635.700" cy="573.500" rx="9" ry="18.500" fill="url(#bore)" stroke="#2f333c"/></g>
            <g fill="#6d7486" stroke="#2f333c"><ellipse cx="627.700" cy="545" rx="2" ry="3.500"/><ellipse cx="647.700" cy="563" rx="2" ry="3.500"/><ellipse cx="623.700" cy="584" rx="2" ry="3.500"/><ellipse cx="643.300" cy="602" rx="2" ry="3.500"/></g>
          </g>
        </defs>
        <path d="M1345 444L1348.500 446L1340 813.500L762 886.500L758 884z" fill="#c8c6bc"/>
        <path d="M688.500 476L1268.500 402.500L1345 444L764 518z" fill="#8996a5" stroke="#31353a"/>
        <path d="M688.500 476L764 518L758 884.500L681 842.500z" fill="#969fb2" stroke="#31353a"/>
        <path d="M764 518L1345 444L1339 811L758 884.500z" fill="#777c7f" stroke="#4b4f53"/>
        <path d="M764 518L1345 444" stroke="#2b2f33" stroke-dasharray="5 2"/>
        <path d="M771 523.500L974.500 497.500L969 802.500L764 827.500z" fill="#67686a" stroke="#47494c"/>
        <path d="M764 827.500L969 802.500L1041 842L763 877.500z" fill="#808384"/>
        <path d="M764 827.500L969 802.500L1005 821L763 850z" fill="#6e7072"/>
        <path d="M974.500 497.500L1048 488.500L1041 842L969 802.500z" fill="#808283"/>
        <path d="M974.500 497.500L1010 493L1005 821.500L969 802.500z" fill="#6c7275"/>
        <path d="M974.500 497.500L969 802.500L764 827.500M969 802.500L1041 841M771 523.500L763 877.500L1041 842M771 523.500L1048 488" fill="none" stroke="#46494c"/>
        <g clip-path="url(#wall)">
          <g opacity=".65"><use href="#ring" x="988" y="498"/><use href="#ring" x="986" y="590"/><use href="#ring" x="984" y="682"/><use href="#ring" x="982" y="773.500"/></g>
          <use href="#ring" x="1022.500" y="518"/><use href="#ring" x="1020.500" y="609.500"/><use href="#ring" x="1019" y="701"/><use href="#ring" x="1017" y="793"/>
        </g>
        <g clip-path="url(#air)">
          <path d="M1054 487L1338 451V806L1047 841z" fill="#858686"/>
          <path d="M1047 798L1265 770L1331 806L1047 842z" fill="#7f8182"/>
          <path d="M1265 770L1331 806" stroke="#484b4e"/>
          <use href="#pipe" x="-5" y="184"/>
          <ellipse cx="1154" cy="802" rx="16.500" ry="4.700" fill="url(#bore)" stroke="#3a3d40" stroke-width="1.300"/>
          <path d="M1048 706L1263 681L1332.500 718.500V722.500L1060 756.500L1048 748z" fill="#7f8182"/>
          <path d="M1263 681L1332.500 718.500L1060 753.500L1049 746.700M1332 722.500L1060 757V753.500M1060 757L1049 750" fill="none" stroke="#3e4144"/>
          <use href="#pipe" x="-3" y="92"/>
          <path d="M1050 614L1257 591.500L1322.500 628.700V632.500L1050 667z" fill="#7f8182"/>
          <path d="M1257 591.500L1322.500 629L1051 663M1322.500 629V632.500L1051 667" fill="none" stroke="#3e4144"/>
          <use href="#pipe" x="0" y="0"/>
          <path d="M1053 523L1267 497L1336 535V539L1065 573L1053 565z" fill="#7f8182"/>
          <path d="M1267 497L1336 535L1065 569.500L1053.500 564M1336 539L1065 573V569.500M1065 573L1053.500 567" fill="none" stroke="#3e4144"/>
          <use href="#pipe" x="2" y="-92"/>
        </g>
        <path d="M1054.500 487L1338 451.500L1331 806L1047 841M1336 452L1330 806" fill="none" stroke="#3e4144"/>
        <path d="M1048 488L1054.500 487L1047.500 841L1041 842z" fill="#717577" stroke="#33373a"/>
        <path d="M1147 325L1181 325L1179 444c-4 5-30 5-34 0z" fill="url(#cylV)"/><path d="M1144.500 441c-1 8 35 8 35 0" fill="none" stroke="#2f333c"/>
        <path d="M1123.500 304v13c2 15 80 15 82 0v-13z" fill="url(#rimV)" stroke="#2f333c"/><ellipse cx="1164.500" cy="304" rx="41" ry="11" fill="#8491a4" stroke="#2f333c"/><ellipse cx="1164.500" cy="304.500" rx="15" ry="4.500" fill="url(#bore)" stroke="#2f333c" stroke-width="1.500"/>
        <g fill="#59606d" stroke="#2b2f36"><ellipse cx="1150" cy="296" rx="3" ry="1.500"/><ellipse cx="1191.500" cy="300.500" rx="3" ry="1.500"/><ellipse cx="1137" cy="307.500" rx="3" ry="1.500"/><ellipse cx="1178.500" cy="312" rx="3" ry="1.500"/></g>
        <path d="M1110.500 933v14c2 14 80 14 82 0v-14z" fill="url(#rimV)" stroke="#2f333c"/><ellipse cx="1151.500" cy="933.500" rx="41" ry="11" fill="#8491a4" stroke="#2f333c"/>
        <g fill="#59606d" stroke="#2b2f36"><ellipse cx="1124.500" cy="928.500" rx="3" ry="1.500"/><ellipse cx="1136.500" cy="940.500" rx="3" ry="1.500"/><ellipse cx="1178.500" cy="937.500" rx="3" ry="1.500"/></g>
        <path d="M1136 838L1170 833.500L1168.500 934c-4 5-30 5-34 0z" fill="url(#cylV)"/><path d="M1134 932c0 7 34 8 35 1" fill="none" stroke="#2f333c"/>
        <use href="#port"/><use href="#port" x="-43" y="241"/>
        <path d="M745.500 292.500v17l4-3.500 3.500 5.500 3-1.500-3-5.500h5.500z" fill="#fff" stroke="#222"/>
        <g class="triad"><path d="M1873.500 995V976" stroke="#1fe01f" stroke-width="2"/><path d="M1870.500 981l3-10 3 10z" fill="#1fe01f"/><path d="M1873.500 995l14-2" stroke="#e01818" stroke-width="2"/><path d="M1886 990l9 2-8 4z" fill="#e01818"/><path d="M1873.500 995l6 4" stroke="#1818e0" stroke-width="2"/><path d="M1880 996l5 6-7-1z" fill="#1818e0" stroke="#1818e0"/><text x="1872" y="968">Y</text><text x="1897" y="993">X</text><text x="1884" y="1004">Z</text></g>
      </svg>
      <div class="gbar">
        <button class="ib" aria-label="Refit" disabled><svg class="i16"><use href="#refit"/></svg></button>
        <button class="ib" aria-label="Zoom to selected"><svg class="i16"><use href="#zfit"/></svg></button>
        <button class="ib" aria-label="Zoom in"><svg class="i16"><use href="#zin"/></svg></button>
        <button class="ib" aria-label="Zoom out"><svg class="i16"><use href="#zout"/></svg></button>
        <button class="ib" aria-label="Repaint"><svg class="i16"><use href="#repaint"/></svg></button>
        <button class="ib drop" aria-label="Rendering"><svg class="i16"><use href="#shade"/></svg></button>
        <button class="ib drop" aria-label="Display style"><svg class="i16"><use href="#box3"/></svg></button>
        <button class="ib on" aria-label="Appearance" aria-pressed="true"><svg class="i16"><use href="#appear"/></svg></button>
        <button class="ib drop" aria-label="Saved orientations"><svg class="i16"><use href="#house"/></svg></button>
        <button class="ib" aria-label="View manager"><svg class="i16"><use href="#views"/></svg></button>
        <button class="ib" aria-label="Perspective"><svg class="i16"><use href="#persp"/></svg></button>
        <button class="ib drop" aria-label="Section"><svg class="i16"><use href="#plane3"/></svg></button>
        <button class="ib drop" aria-label="Datum display"><svg class="i16"><use href="#datum"/></svg></button>
        <button class="ib" aria-label="Annotations"><svg class="i16"><use href="#annot"/></svg></button>
        <button class="ib" aria-label="Spin centre"><svg class="i16"><use href="#spin"/></svg></button>
        <button class="ib" aria-label="Simulate" disabled><svg class="i16"><use href="#tri"/></svg></button>
        <button class="ib" aria-label="Pause" disabled><svg class="i16"><use href="#pause"/></svg></button>
        <button class="ib" aria-label="Resume" disabled><svg class="i16"><use href="#stepOff"/></svg></button>
      </div>
      <p class="rep">On-Demand Simp Rep:DEFAULT REP</p>
    </section>
  </main>

  <footer class="status">
    <button class="ib w20 on" aria-label="Navigator" aria-pressed="true"><svg class="i16"><use href="#navpane"/></svg></button>
    <button class="ib w24" aria-label="Browser"><svg class="i16"><use href="#globe"/></svg></button>
    <button class="ib w24" aria-label="Full screen"><svg class="i16"><use href="#screen"/></svg></button>
    <span class="sep"></span>
    <p>13:17 Select solid domains for conjugate heat transfer simulation (optional) and click Middle Mouse Button (MMB) to get back to the wizard</p>
    <div class="statusright">
      <span class="cell62"></span><span class="cell4"></span>
      <div class="find"><button class="ib w24" aria-label="Find"><svg class="i18"><use href="#binoc"/></svg></button><button class="ib w12" aria-label="Find options"><i class="arr"></i></button></div>
      <button class="ib w26" aria-label="Box select"><svg class="i16"><use href="#dash"/></svg></button>
      <button class="ib w12" aria-label="Select options"><i class="arr"></i></button>
      <button class="ib w26" aria-label="Select geometry" disabled><svg class="i16"><use href="#selOff"/></svg></button>
      <button class="ib vol" aria-label="Volume selection"><svg class="i20"><use href="#volume"/></svg></button>
      <div class="combo"><select aria-label="Selection filter"><option>Geometry</option></select><span><i class="arr"></i></span></div>
    </div>
  </footer>
</div>
</body>
</html>
```
FILE: styles.css
```css
* { box-sizing: border-box; }
html, body { margin: 0; height: 100%; }
body { font: 12px/16px Roboto, "Open Sans", sans-serif; color: #55575b; background: #fff; }
button, input, select { font: inherit; color: inherit; }
button { border: 0; padding: 0; background: none; }
button:disabled { color: #adafb2; }
svg { flex: none; display: block; }
.sprite { position: absolute; width: 0; height: 0; }
.i12 { width: 12px; height: 12px; }
.i16 { width: 16px; height: 16px; }
.i18 { width: 18px; height: 18px; }
.i20 { width: 20px; height: 20px; }
.i32 { width: 32px; height: 32px; }
.flip { transform: scaleX(-1); }

.ib { display: flex; flex: none; align-items: center; justify-content: center; }
.w12 { width: 12px; }
.w14 { width: 14px; }
.w16 { width: 16px; }
.w20 { width: 20px; }
.w24 { width: 24px; }
.w26 { width: 26px; }

.arr { display: inline-block; border: 4px solid transparent; border-top: 5px solid #55585b; border-bottom: 0; vertical-align: 2px; }
.arr.off { border-top-color: #aeb2b3; }
.arr.light { border-top-color: #fff; }
.corner { background: linear-gradient(225deg, #1d8ce0 5px, transparent 5px) no-repeat; }

.app { display: flex; flex-direction: column; min-height: 100vh; border-left: 1px solid #46494d; }

.titlebar { display: flex; height: 25px; background: #dadfdf; border-top: 1px solid #f0f4f4; }
.brand { display: flex; align-items: center; gap: 4px; width: 81px; padding-left: 8px; font: 700 18px/20px Lato, sans-serif; color: #5b5e63; }
.lined { border-left: 1px solid #b8bdbd; }
.doctab { display: flex; align-items: center; gap: 4px; width: 300px; margin: 2px 0 1px 2px; padding: 0 1px 0 4px; background-color: #f2f3f2; border: 1px solid #b5b9b9; }
.doctab span { flex: 1; }
.doctab button { font-weight: 700; }
.winbtns { display: flex; margin-left: auto; padding-right: 2px; }

.tabs { display: flex; height: 28px; background: #40454b; font: 13px/28px "Open Sans", sans-serif; }
.tabs a { padding: 0 22px 0 23px; color: #eceeef; text-decoration: none; white-space: nowrap; }
.tabs .file { width: 60px; padding: 0; text-align: center; background: linear-gradient(135deg, #55ad40, #5fc043 50%, #4fa535); color: #fff; }
.tabs .active { width: 134px; padding: 0; text-align: center; background: #f7f9fb; color: #4f8f37; }
.tabtools { display: flex; margin-left: auto; }
.help { font: 700 14px/20px "Open Sans", sans-serif; color: #fff; }

.ribbon { display: flex; height: 109px; padding-top: 3px; background: #f7f9fb; border-bottom: 1px solid #c6cacb; }
.group { display: flex; flex-direction: column; justify-content: space-between; flex: none; margin-bottom: 2px; border-right: 1px solid #c3c6c9; }
.g-project { width: 198px; padding-left: 2px; }
.g-updates { width: 56px; }
.g-domains { width: 247px; }
.g-materials { width: 62px; }
.g-operations { width: 270px; }
.g-show { width: 143px; }
.g-post { width: 221px; }
.g-run { width: 127px; }
.g-close { width: 50px; }
.tools { display: flex; }
.tools.mid { justify-content: center; }
.cap { padding-bottom: 1px; text-align: center; }
.big { display: flow-root; flex: none; padding-top: 2px; text-align: center; white-space: nowrap; line-height: 16px; }
.big .i32 { margin: 0 auto 10px; }
.tools .big { align-self: flex-start; }
.b40 { width: 40px; }
.b44 { width: 44px; }
.b60 { width: 60px; }
.b72 { width: 74px; }
.g-operations .tools { padding-left: 5px; }
.g-run .tools { padding-left: 2px; }
.stack { display: flex; flex-direction: column; align-items: flex-start; gap: 3px; padding-left: 1px; }
.sm { display: flex; align-items: center; gap: 4px; height: 24px; padding: 0 4px; border: 1px solid transparent; white-space: nowrap; }
.sm.on { background: #e0e2e3; border-color: #bfc3c5; }
.stack.tight { padding-left: 0; }
.tight .sm { padding-left: 2px; gap: 3px; }
.g-post .stack { width: 96px; }
.assistant { margin-left: auto; padding: 0 2px; align-self: flex-start; }
.assistant .i32 { margin-bottom: 4px; }

.work { display: flex; flex: 1; min-height: 0; }
.side { display: flex; flex-direction: column; width: 299px; background: #f7f9f9; border-right: 2px solid #d5d9d9; }
.sidetabs { display: flex; height: 29px; background: #dadfdf; }
.sidetabs .ib { width: 31px; }
.sidebar-tools { display: flex; align-items: center; height: 32px; padding-left: 10px; }
.sidebar-tools .ib { height: 24px; }
.ib.on { background: #dfe2e3; outline: 1px solid #b9bdbf; outline-offset: -1px; }
.sidetabs .ib.on { background: #f7f9f9; outline: 0; }
.grip { width: 2px; height: 16px; margin: 0 10px 0 3px; background: repeating-linear-gradient(#b9bcbe 0 2px, transparent 2px 4px); }
.sidebar-tools .sep { width: 1px; height: 24px; margin: 0 5px 0 4px; background: #c6cacb; }
.sidebar-tools .ib.w24.on { margin-left: 4px; }
.more { font: 700 16px/16px "Open Sans", sans-serif; }
.filter { display: flex; align-items: center; height: 28px; padding-left: 12px; gap: 2px; }
.searchbox { display: flex; align-items: center; width: 220px; height: 27px; background: #fff; border: 1px solid #c3c7c8; }
.searchbox input { flex: 1; min-width: 0; border: 0; outline: 0; padding: 0 4px; background: none; }
.searchbox span { width: 18px; font-size: 16px; color: #9a9d9f; text-align: center; }
.filter .w16, .filter .w24 { margin-right: -3px; }

.tree { display: flex; flex: 1; margin: 5px 4px 0 8px; font: 10px/16px "Open Sans", sans-serif; }
.treemain { width: 223px; }
.treecol { flex: 1; min-width: 0; border-left: 1px solid #dde1e1; white-space: nowrap; }
.head { display: flex; align-items: center; gap: 2px; height: 20px; padding-left: 6px; border-bottom: 1px solid #d9dddd; font-size: 11px; }
.rows { display: grid; grid-auto-rows: 1fr; height: 264px; margin: 0; padding: 0; list-style: none; }
.rows li { display: flex; align-items: center; gap: 5px; padding-left: 8px; background: linear-gradient(#d3d6d7, #d3d6d7) 10px 0 / 1px 100% no-repeat; }
.rows .root { padding-left: 3px; gap: 4px; background: none; }
.rows b { width: 9px; height: 1px; margin-left: 2px; margin-right: -2px; background: #d3d6d7; }
.rows b.exp { width: 9px; height: 8px; margin-left: 0; margin-right: 0; background: none; border: solid transparent; border-width: 4px 0 4px 5px; border-left-color: #5b5e60; }
.treecol .rows { grid-template-rows: repeat(15, 1fr); }
.cell { display: flex; align-items: center; padding-left: 1px; }
.endline { height: 2px; margin-top: 6px; background: #62c44a; }
.endline.first { margin-left: 3px; box-shadow: inset 2px 0 #3f9e2a; }

.scrolls { display: flex; height: 15px; margin: 0 5px 5px 8px; gap: 2px; }
.hs { display: flex; align-items: center; flex: 1; height: 15px; border: 1px solid #dde0e0; background: #f5f7f7; }
.hs.main { flex: 0 0 222px; }
.hs .track { flex: 1; height: 13px; background: #fbfcfc; border: solid #e1e4e4; border-width: 0 1px; }
.hs .thumb { flex: 1; height: 13px; background: #fff; border: 1px solid #cdd1d1; }
.hs .gray { width: 10px; height: 13px; background: #dfe1e1; }
.al, .ar { width: 5px; height: 8px; margin: 0 4px; border: 4px solid transparent; border-width: 4px 0 4px 5px; border-left-color: #7b7e80; }
.al { border-color: transparent #7b7e80 transparent transparent; border-width: 4px 5px 4px 0; }
.al.dim { border-right-color: #b3b6b7; }
.ar.dim { border-left-color: #b3b6b7; }

.canvas { position: relative; display: flex; flex: 1; min-width: 0; flex-direction: column; align-items: center; }
.model { position: absolute; inset: 0; width: 100%; height: 100%; }
.triad text { font: 12px "Liberation Sans", sans-serif; fill: #4674b4; }
.gbar { position: relative; display: flex; width: 466px; height: 31px; margin-top: 5px; padding: 0 2px 0 1px; background: #f7f8fa; border: 1px solid #b9bcbe; }
.gbar .ib { flex: 1; margin: 3px 0; height: 23px; }
.gbar .drop { background: linear-gradient(315deg, #55585b 3px, transparent 3px) no-repeat; }
.rep { position: relative; align-self: flex-start; margin: auto 0 64px 7px; font: 10px/16px "Liberation Sans", sans-serif; color: #94959c; }

.status { display: flex; align-items: center; height: 37px; padding: 0 16px 0 6px; background: #f7f9f9; border-top: 2px solid #d5d9d9; }
.status > .ib { height: 24px; }
.status .ib + .ib { margin-left: 1px; }
.status .sep { width: 1px; height: 24px; margin: 0 18px 0 6px; background: #c8cccc; }
.status p { flex: 1; margin: 0 0 4px; font: 10px/16px "Open Sans", sans-serif; }
.statusright { display: flex; align-items: center; height: 30px; }
.cell62, .cell4, .find { height: 30px; border-left: 1px solid #bfc3c3; }
.cell62 { width: 62px; }
.cell4 { width: 5px; }
.find { display: flex; width: 43px; padding-left: 2px; border-right: 1px solid #bfc3c3; }
.vol { width: 39px; height: 28px; border: 1px solid #b9bdbd; }
.combo { display: grid; grid-template-columns: 1fr 15px; width: 174px; height: 23px; margin-left: 94px; }
.combo select { grid-area: 1 / 1 / 2 / 3; appearance: none; padding: 0 6px; background: #f3f5f5; border: 1px solid #b3b7b8; border-radius: 0; }
.combo span { grid-area: 1 / 2 / 2 / 3; display: grid; place-items: center; border-left: 1px solid #b3b7b8; pointer-events: none; }
```
